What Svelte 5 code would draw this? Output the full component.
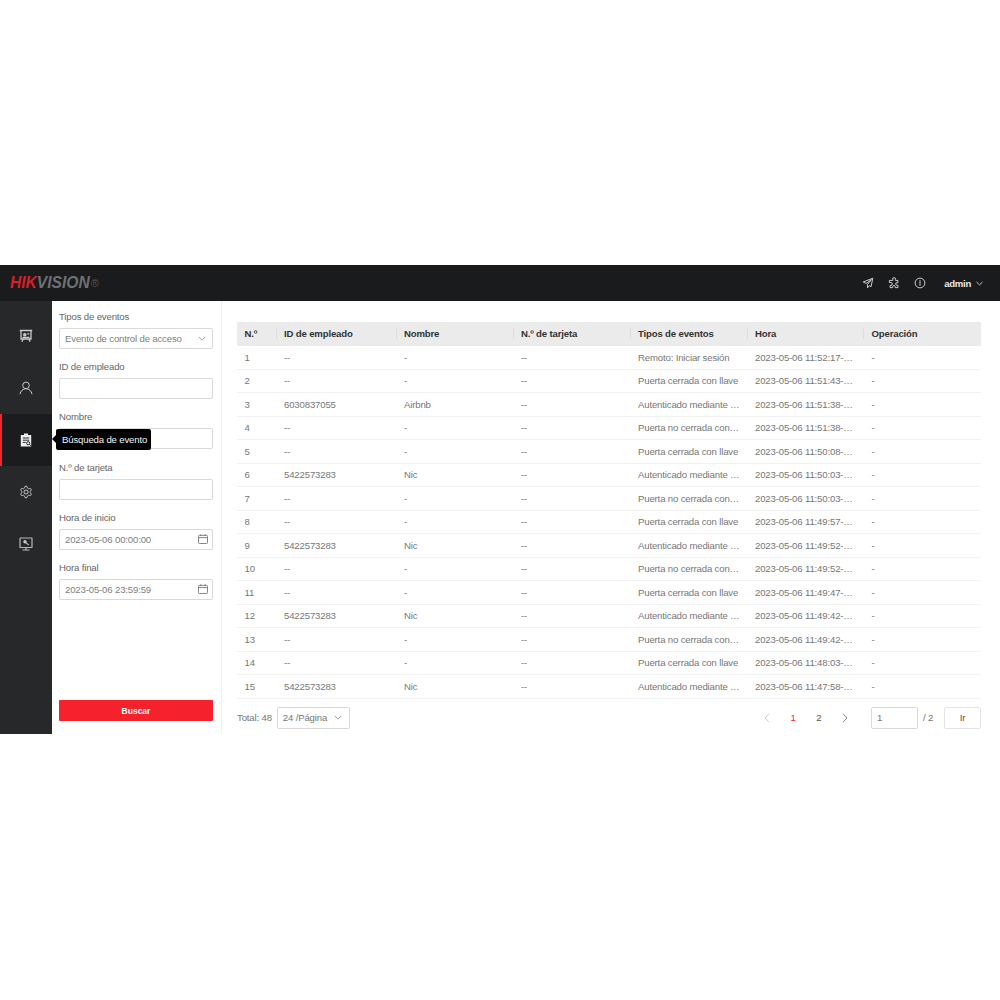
<script>
    const columns = ["N.º", "ID de empleado", "Nombre", "N.º de tarjeta", "Tipos de eventos", "Hora", "Operación"];

    const LOGIN = "Remoto: Iniciar sesión";
    const LOCKED = "Puerta cerrada con llave";
    const AUTH = "Autenticado mediante …";
    const OPEN = "Puerta no cerrada con…";

    const rows = [
        ["--", "-", LOGIN, "11:52:17"],
        ["--", "-", LOCKED, "11:51:43"],
        ["6030837055", "Airbnb", AUTH, "11:51:38"],
        ["--", "-", OPEN, "11:51:38"],
        ["--", "-", LOCKED, "11:50:08"],
        ["5422573283", "Nic", AUTH, "11:50:03"],
        ["--", "-", OPEN, "11:50:03"],
        ["--", "-", LOCKED, "11:49:57"],
        ["5422573283", "Nic", AUTH, "11:49:52"],
        ["--", "-", OPEN, "11:49:52"],
        ["--", "-", LOCKED, "11:49:47"],
        ["5422573283", "Nic", AUTH, "11:49:42"],
        ["--", "-", OPEN, "11:49:42"],
        ["--", "-", LOCKED, "11:48:03"],
        ["5422573283", "Nic", AUTH, "11:47:58"],
    ];
</script>

<div class="page">
    <header class="topbar">
        <div class="logo"><b>HIK</b><span>VISION</span><sup>®</sup></div>
        <div class="top-actions">
            <svg class="top-icon" viewBox="0 0 14 14">
                <path d="M12.600 1.400 1.400 5.800l3.400 1.700L11 3 6.300 8.900l.2 3.700 2-2.400 2.100 1z" />
            </svg>
            <svg class="top-icon" viewBox="0 0 14 14">
                <path d="M5.600 2.900a1.600 1.600 0 1 1 3 0V4h3v2.600H10.400a1.500 1.500 0 1 0 0 3h1.200v2.800H8.400v-1a1.500 1.500 0 1 0-3 0v1H2.400V9.800h1a1.700 1.700 0 1 0 0-3.400H1.600V4h4z" />
            </svg>
            <svg class="top-icon" viewBox="0 0 14 14">
                <circle cx="7" cy="7" r="5.700" />
                <path d="M7 3.700v6.600" />
            </svg>
            <span class="user">admin</span>
            <svg class="user-caret" viewBox="0 0 10 6"><path d="M.7.8 5 5l4.300-4.200" /></svg>
        </div>
    </header>

    <div class="body">
        <nav class="sidebar">
            <div class="nav-item">
                <svg viewBox="0 0 14 14" class="nav-icon thick">
                    <path d="M.8 1.500h12.400M2 1.500v8.500h10V1.500M4 10l-1 2.800M10 10l1 2.800" />
                    <circle cx="5.800" cy="5.800" r="1.800" class="dot" />
                    <path d="M8.300 4.800h2M3.500 8.500h7" />
                </svg>
            </div>
            <div class="nav-item">
                <svg viewBox="0 0 14 14" class="nav-icon">
                    <circle cx="7" cy="4.400" r="3.300" />
                    <path d="M1 13.200c.4-3.200 3-5.500 6-5.500s5.600 2.300 6 5.500" />
                </svg>
            </div>
            <div class="nav-item active">
                <svg viewBox="0 0 14 14" class="nav-icon">
                    <path class="solid" d="M5 .6h4v1.500h3.200v11.300H1.800V2.100H5z" />
                    <path class="cut" d="M3.800 5h6.400M3.800 7.200h6.400M3.800 9.400h2.800" />
                    <circle class="cut" cx="9.200" cy="10.200" r="1.600" />
                    <path class="cut" d="m10.400 11.400 1.500 1.400" />
                </svg>
                <div class="tooltip">Búsqueda de evento</div>
            </div>
            <div class="nav-item">
                <svg viewBox="0 0 24 24" class="nav-icon gear">
                    <path d="M12.220 2h-.44a2 2 0 0 0-2 2v.18a2 2 0 0 1-1 1.730l-.43.25a2 2 0 0 1-2 0l-.15-.08a2 2 0 0 0-2.730.730l-.22.38a2 2 0 0 0 .73 2.730l.15.1a2 2 0 0 1 1 1.720v.51a2 2 0 0 1-1 1.740l-.15.09a2 2 0 0 0-.73 2.730l.22.38a2 2 0 0 0 2.730.730l.15-.08a2 2 0 0 1 2 0l.43.25a2 2 0 0 1 1 1.730V20a2 2 0 0 0 2 2h.44a2 2 0 0 0 2-2v-.18a2 2 0 0 1 1-1.730l.43-.25a2 2 0 0 1 2 0l.15.08a2 2 0 0 0 2.730-.730l.22-.39a2 2 0 0 0-.73-2.730l-.15-.08a2 2 0 0 1-1-1.740v-.5a2 2 0 0 1 1-1.740l.15-.09a2 2 0 0 0 .73-2.730l-.22-.38a2 2 0 0 0-2.730-.730l-.15.08a2 2 0 0 1-2 0l-.43-.25a2 2 0 0 1-1-1.730V4a2 2 0 0 0-2-2z" />
                    <circle cx="12" cy="12" r="3.500" />
                </svg>
            </div>
            <div class="nav-item">
                <svg viewBox="0 0 14 14" class="nav-icon screen">
                    <rect x="1" y="1" width="12" height="9.500" rx=".6" />
                    <path d="M3.500 13h7M7 10.500V13" />
                    <circle cx="6" cy="4.800" r="1.700" class="dot" />
                    <path d="m7 5.800 2.800 2.300" />
                </svg>
            </div>
        </nav>

        <aside class="filters">
            <div class="field">
                <span class="label">Tipos de eventos</span>
                <div class="control">
                    <span>Evento de control de acceso</span>
                    <svg class="caret" viewBox="0 0 10 6"><path d="M1 1l4 4 4-4" /></svg>
                </div>
            </div>
            <div class="field">
                <span class="label">ID de empleado</span>
                <div class="control"></div>
            </div>
            <div class="field">
                <span class="label">Nombre</span>
                <div class="control"></div>
            </div>
            <div class="field">
                <span class="label">N.º de tarjeta</span>
                <div class="control"></div>
            </div>
            <div class="field">
                <span class="label">Hora de inicio</span>
                <div class="control">
                    <span>2023-05-06 00:00:00</span>
                    <svg class="calendar" viewBox="0 0 11 11">
                        <rect x=".5" y="1.500" width="10" height="9" rx="1" />
                        <path d="M.5 4h10M3 .3v2M8 .3v2" />
                    </svg>
                </div>
            </div>
            <div class="field">
                <span class="label">Hora final</span>
                <div class="control">
                    <span>2023-05-06 23:59:59</span>
                    <svg class="calendar" viewBox="0 0 11 11">
                        <rect x=".5" y="1.500" width="10" height="9" rx="1" />
                        <path d="M.5 4h10M3 .3v2M8 .3v2" />
                    </svg>
                </div>
            </div>
            <button class="search">Buscar</button>
        </aside>

        <main class="content">
            <div class="table">
                <div class="row head">
                    {#each columns as col}
                        <div class="cell">{col}</div>
                    {/each}
                </div>
                {#each rows as r, i}
                    <div class="row">
                        <div class="cell">{i + 1}</div>
                        <div class="cell">{r[0]}</div>
                        <div class="cell">{r[1]}</div>
                        <div class="cell">--</div>
                        <div class="cell">{r[2]}</div>
                        <div class="cell">2023-05-06 {r[3]}-…</div>
                        <div class="cell">-</div>
                    </div>
                {/each}
            </div>

            <div class="pager">
                <span class="total">Total: 48</span>
                <div class="page-size">
                    <span>24 /Página</span>
                    <svg class="caret" viewBox="0 0 10 6"><path d="M1 1l4 4 4-4" /></svg>
                </div>
                <div class="pages">
                    <svg class="arrow off" viewBox="0 0 6 10"><path d="M5 .8 1 5l4 4.200" /></svg>
                    <span class="num current">1</span>
                    <span class="num">2</span>
                    <svg class="arrow" viewBox="0 0 6 10"><path d="m1 .8 4 4.200-4 4.200" /></svg>
                </div>
                <div class="jump">1</div>
                <span class="of">/ 2</span>
                <div class="go">Ir</div>
            </div>
        </main>
    </div>
</div>

<style>
    :global(body) {
        margin: 0;
        background: #fff;
    }

    .page {
        padding-top: 265px;
        font-family: "Liberation Sans", Arial, sans-serif;
        font-size: 9.600px;
        letter-spacing: -0.16px;
        color: #777;
    }

    /* ── Top bar ─────────────────────────────────────── */

    .topbar {
        height: 36px;
        background: #1a1b1c;
        display: flex;
        align-items: center;
        justify-content: space-between;
        padding: 0 17px 0 10px;
    }

    .logo {
        font-size: 15.600px;
        letter-spacing: 0;
        font-style: italic;
        font-weight: 700;
        color: #6f7073;
        display: flex;
        align-items: center;
    }

    .logo b {
        color: #d81f2a;
    }

    .logo sup {
        font-size: 11px;
        font-style: normal;
        font-weight: 400;
        margin-left: 1px;
        color: #55565a;
    }

    .top-actions {
        display: flex;
        align-items: center;
    }

    .top-icon {
        width: 12px;
        height: 12px;
        margin-right: 14px;
        fill: none;
        stroke: #e6e6e6;
        stroke-width: 1;
    }

    .user {
        margin-left: 4px;
        font-weight: 700;
        letter-spacing: -0.3px;
        color: #e8e8e8;
    }

    .user-caret {
        width: 7px;
        height: 5px;
        margin-left: 5px;
        fill: none;
        stroke: #e6e6e6;
        stroke-width: 1.200;
    }

    /* ── Body ────────────────────────────────────────── */

    .body {
        height: 433px;
        display: flex;
    }

    .sidebar {
        width: 52px;
        flex: none;
        padding-top: 9px;
        box-sizing: border-box;
        background: #27282a;
    }

    .nav-item {
        position: relative;
        height: 52px;
        display: flex;
        align-items: center;
        justify-content: center;
    }

    .nav-item.active {
        background: #1b1c1d;
        box-shadow: inset 2px 0 0 #f5222d;
    }

    .nav-icon {
        width: 14px;
        height: 14px;
        fill: none;
        stroke: #c9cacc;
        stroke-width: 1;
    }

    .nav-icon.thick {
        stroke-width: 1.300;
    }

    .nav-icon.screen {
        stroke: #b9babc;
        stroke-width: 1.200;
    }

    .nav-icon.gear {
        stroke-width: 1.700;
    }

    .dot {
        fill: #c9cacc;
        stroke: none;
    }

    .solid {
        fill: #eceded;
        stroke: none;
    }

    .cut {
        stroke: #1b1c1d;
        stroke-width: 0.9;
    }

    .tooltip {
        position: absolute;
        left: 56px;
        top: 15px;
        height: 21px;
        line-height: 21px;
        padding: 0 4px 0 6px;
        background: #000;
        color: #f2f2f2;
        border-radius: 2px;
        white-space: nowrap;
        z-index: 2;
    }

    .tooltip::before {
        content: "";
        position: absolute;
        left: -4px;
        top: 6px;
        border: 4px solid transparent;
        border-left: 0;
        border-right-color: #000;
    }

    /* ── Filter column ───────────────────────────────── */

    .filters {
        width: 170px;
        flex: none;
        box-sizing: border-box;
        padding: 9px 8px 13px 7px;
        border-right: 1px solid #f0f0f0;
        display: flex;
        flex-direction: column;
        gap: 11.200px;
    }

    .field {
        display: flex;
        flex-direction: column;
        gap: 4px;
    }

    .label {
        line-height: 14px;
        color: #666;
    }

    .control {
        height: 21px;
        box-sizing: border-box;
        border: 1px solid #d9d9d9;
        border-radius: 2px;
        padding: 0 9px 0 5px;
        display: flex;
        align-items: center;
        justify-content: space-between;
        color: #808080;
    }

    .caret {
        width: 8px;
        height: 5px;
        margin-right: -3px;
        fill: none;
        stroke: #888;
        stroke-width: 1;
    }

    .page-size .caret {
        margin-right: 0;
    }

    .calendar {
        width: 10px;
        height: 10px;
        margin-right: -5px;
        fill: none;
        stroke: #777;
        stroke-width: 1;
    }

    .search {
        margin-top: auto;
        height: 21px;
        border: 0;
        border-radius: 1px;
        padding: 1px 0 0;
        background: #f5222d;
        color: #fff;
        font: 700 8.500px "Liberation Sans", Arial, sans-serif;
    }

    /* ── Table ───────────────────────────────────────── */

    .content {
        flex: 1;
        min-width: 0;
        padding: 21px 19px 0 15px;
    }

    .row {
        display: grid;
        grid-template-columns: 39.500px 120px 117px 117px 117px 116.500px 117px;
        height: 23.500px;
        padding-bottom: 0.5px;
        align-items: center;
        box-sizing: border-box;
        border-bottom: 1px solid #f2f2f2;
    }

    .row.head {
        height: 24px;
        padding-bottom: 1.500px;
        background: #ebebeb;
        border-bottom: 0;
        color: #333;
        font-weight: 700;
    }

    .cell {
        position: relative;
        padding: 0 0 0 7.500px;
        white-space: nowrap;
    }

    .head .cell + .cell::before {
        content: "";
        position: absolute;
        left: -1px;
        top: 0;
        bottom: 0;
        width: 1px;
        background: #dedede;
    }

    /* ── Pager ───────────────────────────────────────── */

    .pager {
        margin-top: 8px;
        display: flex;
        align-items: center;
    }

    .total {
        margin-right: 5px;
    }

    .page-size {
        width: 73px;
        height: 22px;
        box-sizing: border-box;
        border: 1px solid #d9d9d9;
        border-radius: 2px;
        padding: 0 7px 0 5px;
        display: flex;
        align-items: center;
        justify-content: space-between;
    }

    .pages {
        margin-left: auto;
        width: 84px;
        display: flex;
        align-items: center;
        justify-content: space-between;
    }

    .arrow {
        width: 6px;
        height: 10px;
        fill: none;
        stroke: #888;
        stroke-width: 1;
    }

    .arrow.off {
        stroke: #ccc;
    }

    .num {
        color: #555;
    }

    .num.current {
        color: #f5222d;
    }

    .jump {
        margin-left: 23px;
        width: 47px;
        height: 22px;
        line-height: 20px;
        box-sizing: border-box;
        border: 1px solid #d9d9d9;
        border-radius: 2px;
        padding-left: 5px;
    }

    .of {
        margin-left: 5px;
        width: 21px;
    }

    .go {
        width: 37px;
        height: 22px;
        line-height: 20px;
        box-sizing: border-box;
        border: 1px solid #e4e4e4;
        border-radius: 2px;
        text-align: center;
        color: #555;
    }
</style>
